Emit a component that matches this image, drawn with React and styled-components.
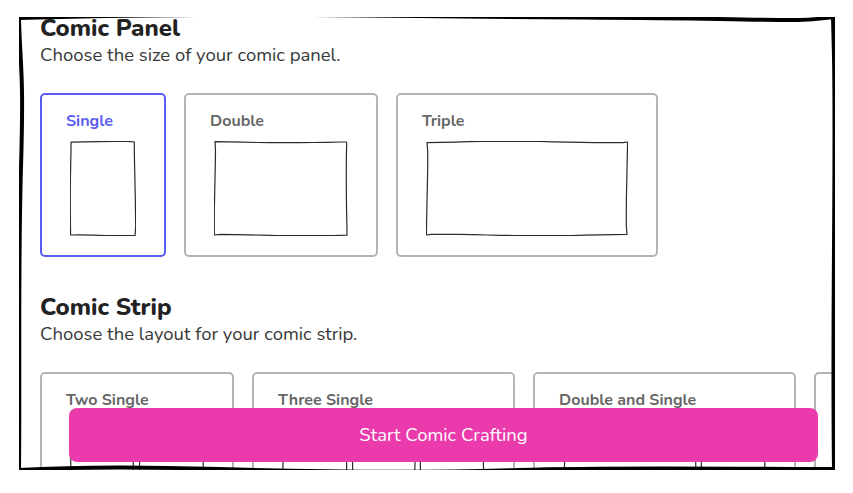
import styled, { createGlobalStyle } from "styled-components";

const GlobalStyle = createGlobalStyle`
  html, body {
    margin: 0;
    padding: 0;
    background: #fff;
  }
  body {
    font-family: "Nunito", Lato, "Noto Sans", sans-serif;
    color: #222;
  }
`;

// deterministic jitter so the sketch lines look hand drawn but stay put
const jitter = (i, seed) => Math.sin(i * 12.9898 + seed * 78.233) * 0.75;

function wobblyRect(x, y, w, h, seed) {
  const pts = [];
  const step = 14;
  let k = 0;
  const push = (px, py) => {
    pts.push([px, py]);
    k += 1;
  };
  for (let t = 0; t < w; t += step) push(x + t, y + jitter(k, seed));
  for (let t = 0; t < h; t += step) push(x + w + jitter(k, seed), y + t);
  for (let t = 0; t < w; t += step) push(x + w - t, y + h + jitter(k, seed));
  for (let t = 0; t < h; t += step) push(x + jitter(k, seed), y + h - t);
  return (
    "M" +
    pts.map(([a, b]) => `${a.toFixed(1)} ${b.toFixed(1)}`).join(" L") +
    " Z"
  );
}

const panels = [
  { label: "Single", rects: [64] },
  { label: "Double", rects: [132] },
  { label: "Triple", rects: [200] },
];

const strips = [
  { label: "Two Single", rects: [63, 63] },
  { label: "Three Single", rects: [63, 63, 63] },
  { label: "Double and Single", rects: [132, 63] },
  { label: "Four Single", rects: [62, 62, 62, 62] },
];

function Sketch({ rects, seed }) {
  const gap = 6;
  const h = 93;
  const total = rects.reduce((s, r) => s + r, 0) + gap * (rects.length - 1);
  let x = 1;
  return (
    <SketchSvg width={total + 2} height={h + 2} viewBox={`0 0 ${total + 2} ${h + 2}`}>
      {rects.map((w, i) => {
        const d = wobblyRect(x, 1, w, h, seed + i * 3);
        x += w + gap;
        return (
          <path
            key={i}
            d={d}
            fill="none"
            stroke="#2b2b2b"
            strokeWidth="1.2"
            strokeLinejoin="round"
          />
        );
      })}
    </SketchSvg>
  );
}

function Option({ label, rects, selected, seed }) {
  return (
    <OptionCard $selected={selected}>
      <CardLabel $selected={selected}>{label}</CardLabel>
      <Sketch rects={rects} seed={seed} />
    </OptionCard>
  );
}

export default function App() {
  return (
    <>
      <GlobalStyle />
      <Page>
        <Frame>
          <Content>
            <Section>
              <Heading>Comic Panel</Heading>
              <Subtitle>Choose the size of your comic panel.</Subtitle>
              <OptionRow>
                {panels.map((p, i) => (
                  <Option key={p.label} {...p} selected={i === 0} seed={i + 1} />
                ))}
              </OptionRow>
            </Section>
            <Section>
              <Heading>Comic Strip</Heading>
              <Subtitle>Choose the layout for your comic strip.</Subtitle>
              <OptionRow>
                {strips.map((s, i) => (
                  <Option key={s.label} {...s} seed={i + 7} />
                ))}
              </OptionRow>
            </Section>
          </Content>
          <StartButton type="button">Start Comic Crafting</StartButton>
          <FrameOutline viewBox="0 0 816 453" preserveAspectRatio="none">
            <path
              d="M0 1 C100 -2, 250 -3, 400 -1 S600 0, 700 2 S790 3, 814 0
                 L815 40 C817 150, 813 300, 815 452
                 C700 452, 600 450, 500 453 S300 455, 200 452 S50 450, 0 453
                 C1 350, -1 250, 2 150 S1 50, 0 1 Z"
              fill="none"
              stroke="#000"
              strokeWidth="4"
              strokeLinejoin="round"
            />
          </FrameOutline>
        </Frame>
      </Page>
    </>
  );
}

const Page = styled.div`
  width: 853px;
  height: 493px;
  padding: 17px 0 0 19px;
  box-sizing: border-box;
`;

const Frame = styled.div`
  position: relative;
  width: 816px;
  height: 453px;
  overflow: hidden;
`;

const FrameOutline = styled.svg`
  position: absolute;
  inset: 0;
  width: 100%;
  height: 100%;
  overflow: visible;
  pointer-events: none;
`;

const Content = styled.div`
  margin-top: -5px;
  padding: 0 0 0 21px;
  display: flex;
  flex-direction: column;
  gap: 34px;
`;

const Section = styled.section`
  display: flex;
  flex-direction: column;
`;

const Heading = styled.h2`
  margin: 0;
  font-size: 24px;
  line-height: 32px;
  font-weight: 800;
  color: #222;
`;

const Subtitle = styled.p`
  margin: -2px 0 25px;
  font-size: 18.5px;
  line-height: 26px;
  color: #383838;
`;

const OptionRow = styled.div`
  display: flex;
  gap: 18px;
  align-items: flex-start;
`;

const OptionCard = styled.div`
  flex: none;
  display: flex;
  flex-direction: column;
  align-items: center;
  padding: 16px 28px 19px;
  border: 2px solid ${(p) => (p.$selected ? "#5a5cf2" : "#b4b4b4")};
  border-radius: 5px;
  background: #fff;
`;

const CardLabel = styled.div`
  align-self: stretch;
  margin: 0 0 10px -4px;
  font-size: 16px;
  line-height: 20px;
  font-weight: 700;
  color: ${(p) => (p.$selected ? "#5a5cf2" : "#666")};
`;

const SketchSvg = styled.svg`
  display: block;
`;

const StartButton = styled.button`
  position: absolute;
  left: 50px;
  top: 391px;
  width: 749px;
  height: 54px;
  border: none;
  border-radius: 8px;
  background: #eb3aac;
  color: #fff;
  font-family: inherit;
  font-size: 18.5px;
  cursor: pointer;
`;
